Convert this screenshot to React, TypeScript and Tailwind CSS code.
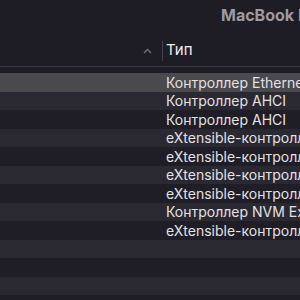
const rows = [
  "Контроллер Ethernet",
  "Контроллер AHCI",
  "Контроллер AHCI",
  "eXtensible-контроллер хоста USB",
  "eXtensible-контроллер хоста USB",
  "eXtensible-контроллер хоста USB",
  "eXtensible-контроллер хоста USB",
  "Контроллер NVM Express",
  "eXtensible-контроллер хоста USB",
  "",
  "",
  "",
  "",
];

export default function App() {
  return (
    <div
      className="h-[300px] w-[300px] overflow-hidden bg-[#1e1c24] text-[14px]"
      style={{ fontFamily: 'Inter, "Noto Sans", sans-serif' }}
    >
      <div className="flex h-[30px] items-center whitespace-nowrap pl-[221px] text-[16px] font-bold text-[#9c9aa3]">
        MacBook Pro
      </div>
      <div className="flex h-[37px] items-center border-b border-[#37353d] pt-[5px]">
        <div className="flex w-[162px] justify-end pr-[10px]">
          <svg width="9" height="6" viewBox="0 0 9 6">
            <path d="M1 5 L4.5 1.5 L8 5" fill="none" stroke="#6f6d75" strokeWidth="1.4" />
          </svg>
        </div>
        <div className="h-[20px] w-px bg-[#45434b]" />
        <div className="pl-[3px] text-[15px] text-[#f0eff2]">Тип</div>
      </div>
      <div className="h-[6px]" />
      {rows.map((r, i) => (
        <div
          key={i}
          className={`flex h-[18.5px] items-center whitespace-nowrap pl-[166px] text-[#e2e1e4] ${
            i === 0 ? "bg-[#4a494b]" : i % 2 === 1 ? "bg-[#2a2831]" : "bg-[#1f1d25]"
          }`}
        >
          {r}
        </div>
      ))}
    </div>
  );
}
